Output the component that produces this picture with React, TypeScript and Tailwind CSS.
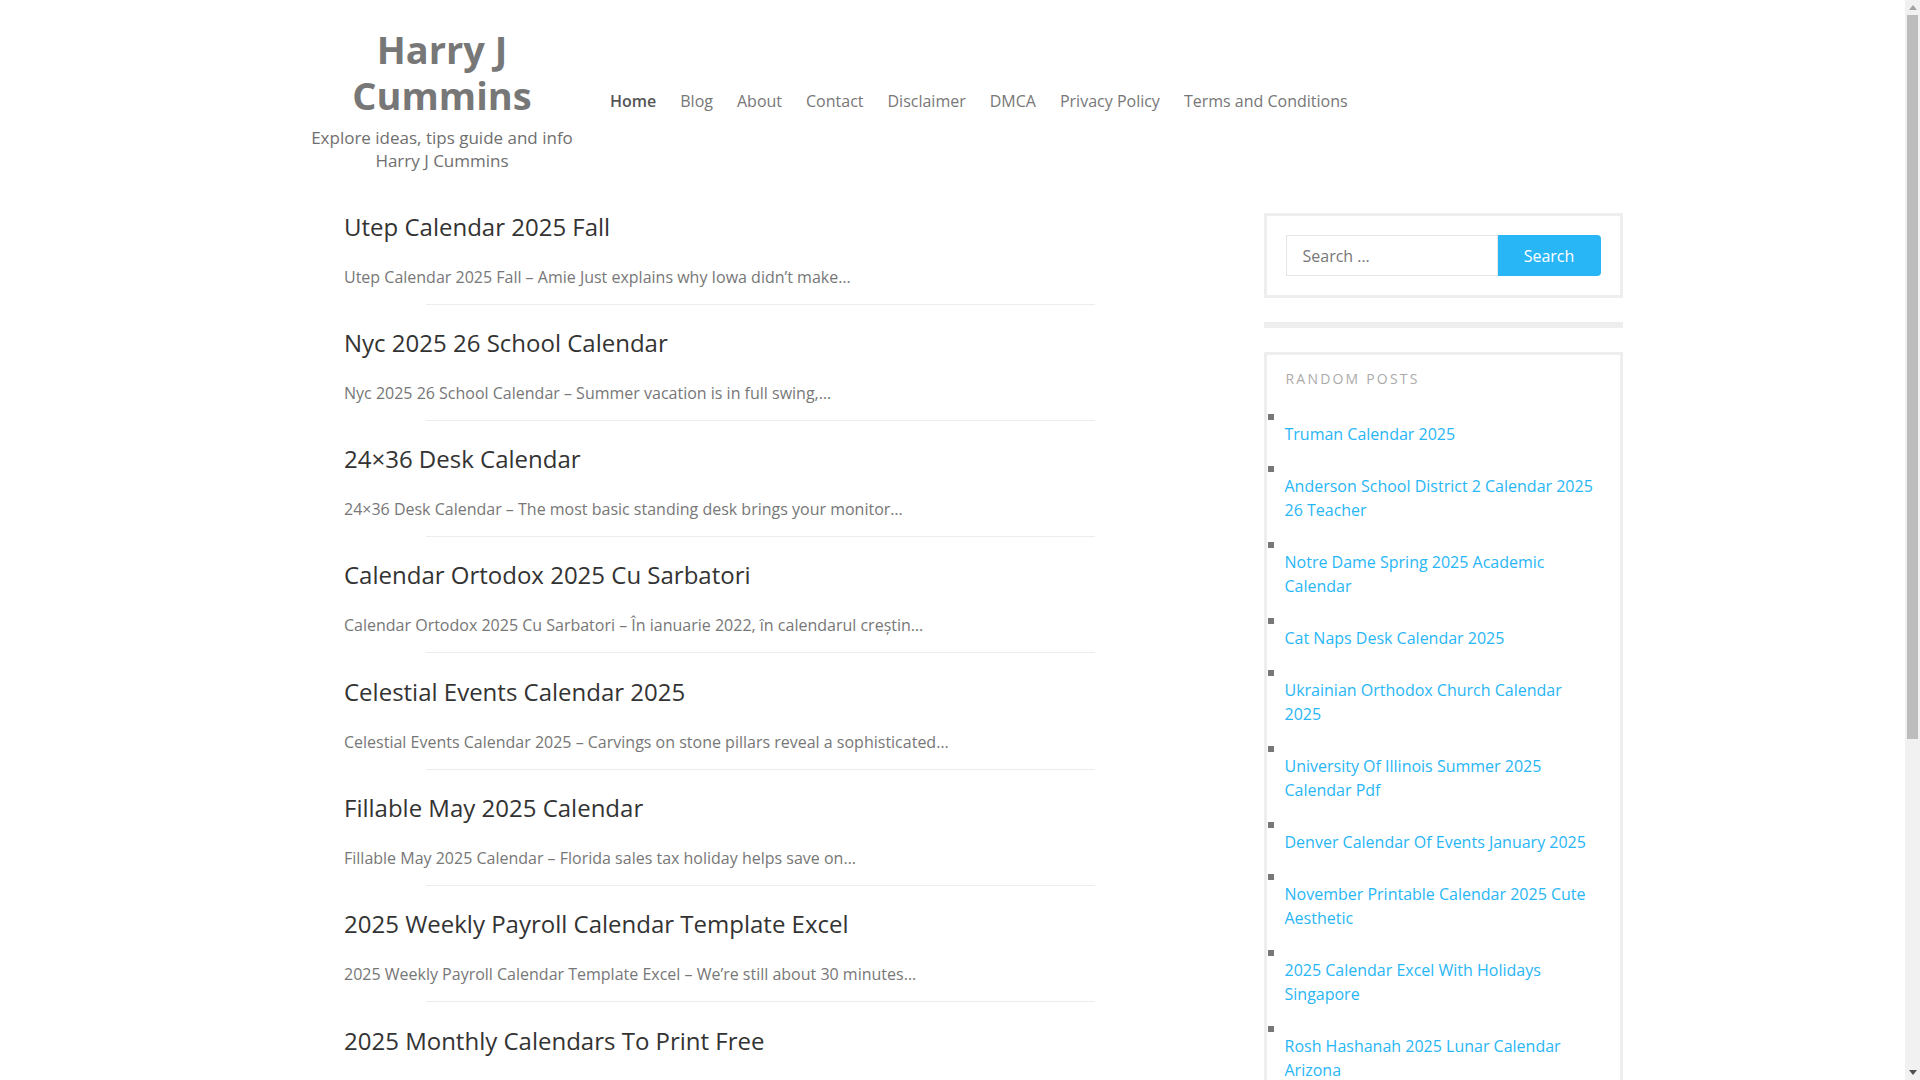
import React from "react";

const navItems = [
  { label: "Home", active: true },
  { label: "Blog" },
  { label: "About" },
  { label: "Contact" },
  { label: "Disclaimer" },
  { label: "DMCA" },
  { label: "Privacy Policy" },
  { label: "Terms and Conditions" },
];

const posts = [
  {
    title: "Utep Calendar 2025 Fall",
    excerpt: "Utep Calendar 2025 Fall – Amie Just explains why Iowa didn’t make…",
  },
  {
    title: "Nyc 2025 26 School Calendar",
    excerpt: "Nyc 2025 26 School Calendar – Summer vacation is in full swing,…",
  },
  {
    title: "24×36 Desk Calendar",
    excerpt: "24×36 Desk Calendar – The most basic standing desk brings your monitor…",
  },
  {
    title: "Calendar Ortodox 2025 Cu Sarbatori",
    excerpt: "Calendar Ortodox 2025 Cu Sarbatori – În ianuarie 2022, în calendarul creștin…",
  },
  {
    title: "Celestial Events Calendar 2025",
    excerpt: "Celestial Events Calendar 2025 – Carvings on stone pillars reveal a sophisticated…",
  },
  {
    title: "Fillable May 2025 Calendar",
    excerpt: "Fillable May 2025 Calendar – Florida sales tax holiday helps save on…",
  },
  {
    title: "2025 Weekly Payroll Calendar Template Excel",
    excerpt: "2025 Weekly Payroll Calendar Template Excel – We’re still about 30 minutes…",
  },
  {
    title: "2025 Monthly Calendars To Print Free",
    excerpt: "2025 Monthly Calendars To Print Free – Keep track of every important date…",
  },
  {
    title: "Kean University Calendar 2025",
    excerpt: "Kean University Calendar 2025 – The spring semester begins with a week of…",
  },
  {
    title: "Printable 2025 Calendar With Holidays",
    excerpt: "Printable 2025 Calendar With Holidays – Plan your year ahead with a simple…",
  },
  {
    title: "Uga Academic Calendar 2025 Fall",
    excerpt: "Uga Academic Calendar 2025 Fall – Classes start a little earlier this year…",
  },
];

const randomPosts = [
  "Truman Calendar 2025",
  "Anderson School District 2 Calendar 2025 26 Teacher",
  "Notre Dame Spring 2025 Academic Calendar",
  "Cat Naps Desk Calendar 2025",
  "Ukrainian Orthodox Church Calendar 2025",
  "University Of Illinois Summer 2025 Calendar Pdf",
  "Denver Calendar Of Events January 2025",
  "November Printable Calendar 2025 Cute Aesthetic",
  "2025 Calendar Excel With Holidays Singapore",
  "Rosh Hashanah 2025 Lunar Calendar Arizona",
  "Tamu Academic Calendar 2025 Spring",
  "Lunar Calendar 2025 Chinese New Year",
  "Ucsd Calendar 2025 26 Quarter Dates",
];

function FakeScrollbar() {
  return (
    <div
      aria-hidden="true"
      className="fixed right-0 top-0 flex h-screen w-[15px] flex-col items-center bg-[#f1f1f1]"
    >
      <div className="flex h-[15px] w-full items-center justify-center">
        <svg width="8" height="5" viewBox="0 0 8 5">
          <polygon points="4,0 8,5 0,5" fill="#a3a3a3" />
        </svg>
      </div>
      <div className="h-[724px] w-[11px] bg-[#bcbcbc]" />
      <div className="flex-1" />
      <div className="flex h-[15px] w-full items-center justify-center">
        <svg width="8" height="5" viewBox="0 0 8 5">
          <polygon points="0,0 8,0 4,5" fill="#505050" />
        </svg>
      </div>
    </div>
  );
}

export default function App() {
  return (
    <div className="min-h-screen bg-white font-['Open_Sans',sans-serif]">
      <div className="ml-[282.5px] w-[1340px] pb-[100px]">
        <header className="flex items-center pt-[26px]">
          <div className="ml-[17.5px] w-[284px] shrink-0 text-center">
            <h1 className="text-[38px] font-bold leading-[46px] text-[#777777]">
              Harry J Cummins
            </h1>
            <p className="mt-[7.5px] text-[17px] leading-[23px] text-[#6f6f6f]">
              Explore ideas, tips guide and info Harry J Cummins
            </p>
          </div>
          <nav className="ml-[14px] flex pt-[5px]">
            {navItems.map((item) => (
              <a
                key={item.label}
                href="#"
                className={
                  item.active
                    ? "px-[12px] text-[16px] font-semibold leading-[24px] text-[#555555]"
                    : "px-[12px] text-[16px] leading-[24px] text-[#777777]"
                }
              >
                {item.label}
              </a>
            ))}
          </nav>
        </header>

        <div className="mt-[40px] flex">
          <main className="ml-[61.5px] w-[751px] shrink-0">
            {posts.map((p, i) => (
              <article key={p.title} className={i > 0 ? "pt-[23.3px]" : ""}>
                <h2 className="text-[24px] leading-[30px] text-[#333333]">
                  <a href="#">{p.title}</a>
                </h2>
                <p className="mt-[23px] text-[16px] leading-[24px] text-[#777777]">
                  {p.excerpt}
                </p>
                <div className="ml-[82px] mt-[15px] h-px w-[669px] bg-[#ececec]" />
              </article>
            ))}
          </main>

          <aside className="ml-auto w-[359px] shrink-0 pt-[1.5px]">
            <div className="flex border-[3px] border-[#eeeeee] p-[19px]">
              <input
                type="search"
                placeholder="Search …"
                className="h-[41px] w-[212px] border border-[#e6e6e6] bg-white px-[16px] text-[16px] text-[#555] outline-none placeholder:text-[#777777]"
              />
              <button className="h-[41px] w-[103px] rounded-r-[4px] bg-[#29b6f6] text-[16px] text-white">
                Search
              </button>
            </div>

            <div className="mt-[24px] h-[6px] bg-[#eeeeee]" />

            <div className="mt-[24px] border-[3px] border-[#eeeeee] pb-[10px] pt-[14px]">
              <h3 className="ml-[19px] text-[14px] uppercase leading-[20px] tracking-[2.2px] text-[#ababab]">
                Random Posts
              </h3>
              <ul className="mt-[25px]">
                {randomPosts.map((r) => (
                  <li key={r} className="pb-[20px]">
                    <div className="ml-[1px] h-[6px] w-[6px] bg-[#777777]" />
                    <a
                      href="#"
                      className="ml-[18px] mt-[2px] block pr-[19px] text-[16px] leading-[24px] text-[#29b6f6]"
                    >
                      {r}
                    </a>
                  </li>
                ))}
              </ul>
            </div>
          </aside>
        </div>
      </div>
      <FakeScrollbar />
    </div>
  );
}
